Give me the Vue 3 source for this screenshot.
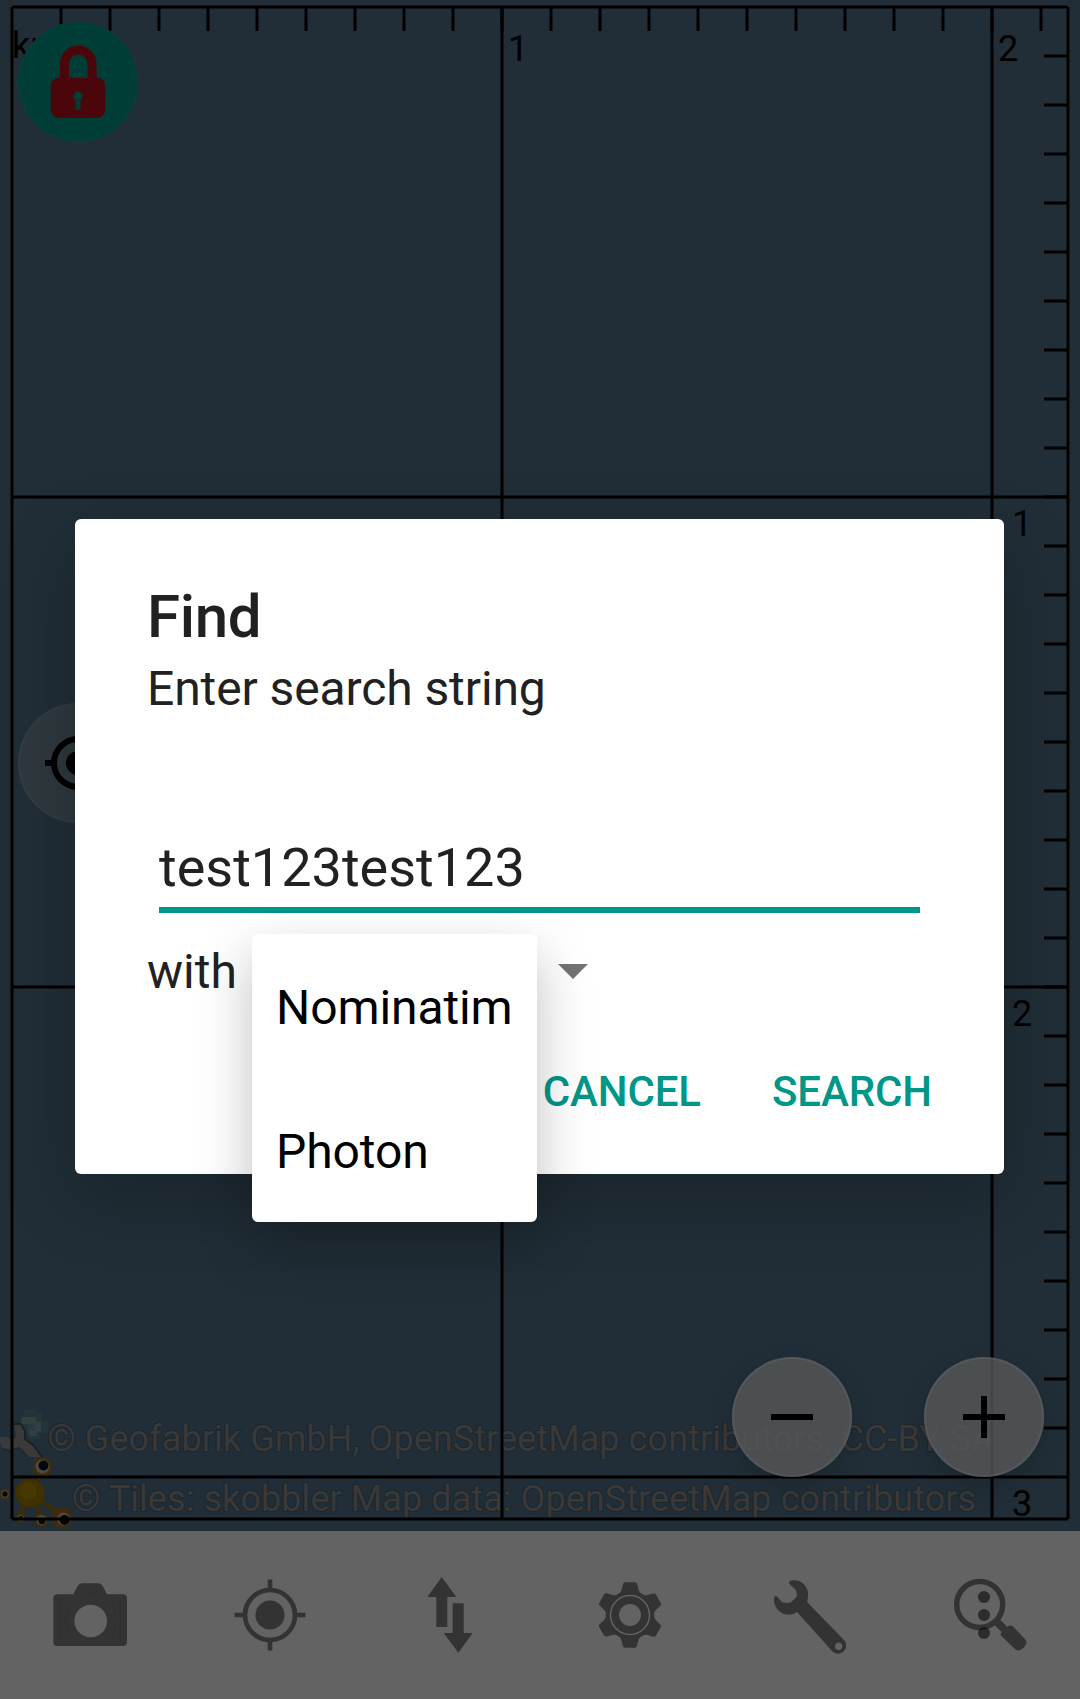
<script setup>
const range = (n) => Array.from({ length: n }, (_, i) => i)
const topTicks = range(21).map((i) => 61 + i * 49).filter((x) => x < 1060)
const sideTicks = range(29).map((i) => 56 + i * 49)
const teeth = range(6).map((i) => i * 60)
const providers = ['Nominatim', 'Photon']
</script>

<template>
  <div class="screen">
    <main class="map">
      <svg class="canvas" width="1080" height="1531" viewBox="0 0 1080 1531">
        <g class="geofabrik">
          <path d="M24 1409h12v4h6v8h6v12h-8v6H29v-4h-9v-20h4z" fill="#22363a" />
          <path d="M23 1417h13v5h5v9h-4v5h-8v-12h-8z" fill="#343f42" />
          <path d="M28 1424h7v7h-7z" fill="#2a3a3e" />
          <path d="M14 1424h7l4 7v8l9 7 8 11H28l-9-9-9 2-7-1-3-6v-6h7l4 3 5-3z" fill="#3b3a3a" />
          <path d="M14 1424h7l4 7v8l9 7 8 11" fill="none" stroke="#1b2023" stroke-width="2" />
          <path d="M28 1457l-9-9-9 3-7-2" fill="none" stroke="#22272a" stroke-width="2" />
        </g>
        <g class="skobbler">
          <path d="M38 1480L42 1470M25 1503L20 1514M35 1502L40 1514M40 1500L58 1513" fill="none" stroke="#3b2d0b" stroke-width="4.500" />
          <circle cx="42.500" cy="1467" r="10" fill="#402c0a" />
          <circle cx="30" cy="1493" r="14.500" fill="#3f3100" />
          <circle cx="28" cy="1491" r="9" fill="#453800" />
          <circle cx="5" cy="1494" r="5.500" fill="#402c0a" />
          <circle cx="21" cy="1518" r="5" fill="#402c0a" />
          <circle cx="41" cy="1520" r="7" fill="#402c0a" />
          <circle cx="62" cy="1518" r="10.500" fill="#402c0a" />
          <g fill="#4b4a49">
            <circle cx="42.500" cy="1466.500" r="7" />
            <circle cx="5" cy="1494" r="3.700" />
            <circle cx="21" cy="1518" r="3" />
            <circle cx="41.500" cy="1520" r="5" />
            <circle cx="63.500" cy="1519" r="6.500" />
          </g>
          <g fill="#060708">
            <circle cx="43.500" cy="1465.500" r="5" />
            <circle cx="5" cy="1494" r="2.700" />
            <circle cx="21" cy="1518" r="2" />
            <circle cx="42" cy="1521" r="3.300" />
            <circle cx="64.500" cy="1520" r="4.900" />
          </g>
        </g>

        <g class="credits">
          <text x="47.500" y="1451">© Geofabrik GmbH, OpenStreetMap contributors, CC-BY-SA</text>
          <text x="72" y="1511">© Tiles: skobbler Map data: OpenStreetMap contributors</text>
        </g>

        <g class="grid">
          <path d="M12 7V1519M502 7V1519M992 7V1519M1068 7V1519" />
          <path d="M12 7H1068M12 497H1068M12 987H1068M12 1477H1068M12 1519H1068" />
          <path v-for="x in topTicks" :key="'t' + x" :d="`M${x} 7V31`" />
          <path v-for="y in sideTicks" :key="'s' + y" :d="`M1044 ${y}H1068`" />
        </g>
        <g class="labels">
          <text x="12" y="58">km</text>
          <text x="508" y="61">1</text>
          <text x="998" y="61">2</text>
          <text x="1012" y="536">1</text>
          <text x="1012" y="1026">2</text>
          <text x="1012" y="1516">3</text>
        </g>
      </svg>

      <button class="fab lock" aria-label="Lock">
        <svg width="120" height="120" viewBox="18 22 120 120">
          <path d="M64.500 80V64a13.800 14 0 0 1 27.600 0V80" fill="none" stroke="#4b060b" stroke-width="9" />
          <rect x="50.700" y="77.700" width="54.700" height="40.300" rx="8.500" fill="#4b060b" />
          <path d="M76 97h4v12q-2 1.500-4 0z" fill="#003d36" stroke="#003d36" />
          <circle cx="78" cy="96" r="4.600" fill="#003d36" />
        </svg>
      </button>
      <button class="fab follow" aria-label="Follow position">
        <svg width="120" height="120" viewBox="-60 -60 120 120">
          <circle r="24" fill="none" stroke="#000" stroke-width="6" />
          <circle r="12" />
          <path d="M-33 0h8M25 0h8M0-33v8M0 25v8" stroke="#000" stroke-width="6" />
        </svg>
      </button>
      <button class="fab zoom out" aria-label="Zoom out">
        <svg width="120" height="120" viewBox="-60 -60 120 120"><path d="M-21-3h42v6h-42z" /></svg>
      </button>
      <button class="fab zoom in" aria-label="Zoom in">
        <svg width="120" height="120" viewBox="-60 -60 120 120"><path d="M-21-3h18v-18h6v18h18v6H3v18h-6V3h-18z" /></svg>
      </button>
    </main>

    <nav class="toolbar">
      <svg viewBox="-45 -45 90 90">
        <path fill-rule="evenodd" d="M-32.700-20.700h16l4.500-8.500q1.500-2.500 4-2.500H8.500q2.500 0 4 2.500l4.500 8.500H33q4 0 4 4V27q0 4-4 4H-32.700q-4 0-4-4V-16.700q0-4 4-4zM.7-10.300a16.300 16.300 0 1 0 .01 0z" />
        <path class="crease" d="M-30-13v37M30-13v37M-18-13q-12 19 0 37M20-13q12 19 0 37M-7-22H9" />
      </svg>
      <svg viewBox="-45 -45 90 90">
        <circle r="25" fill="none" stroke="#333" stroke-width="4.700" />
        <circle r="14.500" />
        <path d="M-35.500 0h10M25.500 0h10M0-35.500v10M0 25.500v10" stroke="#333" stroke-width="4.700" />
      </svg>
      <svg viewBox="-45 -45 90 90">
        <path d="M-8.300-38L6.300-18h-9v30h-11v-30h-9zM8.300 37.700L-6.300 18h9v-29.700h11V18h9z" />
      </svg>
      <svg viewBox="-45 -45 90 90">
        <circle r="20.500" fill="none" stroke="#333" stroke-width="7" />
        <path v-for="a in teeth" :key="a" :transform="`rotate(${a})`" d="M-13-20.500Q-9.500-21.500-8.600-24.500L-6.900-31q.4-1.700 2-1.700H5.100q1.600 0 2 1.700L8.800-24.500Q9.600-21.500 13-20.500z" />
        <circle r="14.700" fill="none" stroke="#333" stroke-width="7.500" />
        <circle r="19.500" fill="none" stroke="#636363" stroke-width="1.500" />
      </svg>
      <svg viewBox="-45 -45 90 90">
        <path fill-rule="evenodd" d="M-21-32.300C-21-35-15-35-12-34.200C-5-32-1-25-2-19L-2.700-12.700L34.500 25.500A8.200 8.200 0 0 1 23 37L-13-3C-16-.5-20-.2-23-.4C-31-1.500-37-9-36-17Q-35-20-33-18.500L-28-12.800Q-23-11.300-19-12.700L-13.300-18.300Q-12.800-22-14-25L-20-30.500zM28.700 27.600a3.700 3.700 0 1 0 .01 0z" />
      </svg>
      <svg viewBox="-45 -45 90 90">
        <circle cx="-10.300" cy="-10.500" r="23" fill="none" stroke="#333" stroke-width="5.500" />
        <path d="M6 6l12 12" stroke="#333" stroke-width="7.500" />
        <path d="M11 18l7.500-7q2.500-1.300 4.500.5L35 24q3 3.500-1 8.500-5 4.500-8.500 2L11.500 21q-1.500-1.500-.5-3z" />
        <g fill="#000" fill-opacity=".55">
          <circle cx="-6" cy="-18" r="6" />
          <circle cx="-6" cy="0" r="6" />
          <circle cx="-6" cy="18" r="6" />
        </g>
      </svg>
    </nav>

    <section class="dialog">
      <h1>Find</h1>
      <p class="message">Enter search string</p>
      <div class="field">test123test123</div>
      <div class="spinner">
        <span class="with">with</span>
        <svg width="30" height="15" viewBox="0 0 30 15"><path d="M0 0h30L15 15z" fill="#737373" /></svg>
      </div>
      <div class="actions">
        <button>CANCEL</button>
        <button>SEARCH</button>
      </div>
    </section>

    <ul class="menu">
      <li v-for="p in providers" :key="p">{{ p }}</li>
    </ul>
  </div>
</template>

<style>
body {
  margin: 0;
}
</style>

<style scoped>
.screen {
  position: relative;
  width: 1080px;
  height: 1699px;
  overflow: hidden;
  display: flex;
  flex-direction: column;
  font-family: Roboto, "Liberation Sans", sans-serif;
}
button {
  border: 0;
  padding: 0;
  background: none;
  font: inherit;
}
.map {
  position: relative;
  height: 1531px;
  background: #212e37;
}
.canvas {
  display: block;
}
.grid path {
  stroke: #000;
  stroke-width: 3;
}
.labels text {
  font-size: 36px;
  fill: #000;
}
.credits text {
  font-size: 36px;
  letter-spacing: 0.07px;
  fill: #3a3938;
  stroke: #1c262d;
  stroke-width: 2px;
  paint-order: stroke;
}
.fab {
  position: absolute;
  width: 120px;
  height: 120px;
  border-radius: 50%;
}
.fab svg {
  display: block;
}
.lock {
  left: 18px;
  top: 22px;
  background: #003d36;
  box-shadow: inset 0 0 0 1.5px #05403a;
}
.follow {
  left: 18px;
  top: 703px;
  background: #2e383e;
  box-shadow: inset 0 0 0 2px #333c41;
}
.zoom {
  top: 1357px;
  background: rgba(87, 88, 88, 0.8);
  box-shadow: inset 0 0 0 2px rgba(100, 100, 100, 0.4), 0 8px 24px rgba(0, 0, 0, 0.15);
}
.out {
  left: 732px;
}
.in {
  left: 924px;
}
.toolbar {
  height: 168px;
  background: #636363;
  display: flex;
  align-items: center;
  justify-content: space-around;
}
.toolbar svg {
  width: 90px;
  height: 90px;
  fill: #333;
}
.crease {
  fill: none;
  stroke: #303030;
  stroke-width: 1;
}
.dialog {
  position: absolute;
  left: 75px;
  top: 519px;
  width: 929px;
  height: 655px;
  box-sizing: border-box;
  padding: 63px 72px 0;
  border-radius: 6px;
  background: #fff;
  color: #212121;
  box-shadow: 0 24px 72px rgba(0, 0, 0, 0.24);
}
h1 {
  margin: 0;
  font-size: 60px;
  line-height: 70px;
  font-weight: 500;
  letter-spacing: -0.3px;
}
.message {
  margin: 9px 0 0;
  font-size: 48px;
  line-height: 56px;
  letter-spacing: -0.1px;
}
.field {
  margin: 119px 12px 0;
  padding-bottom: 7px;
  width: 761px;
  border-bottom: 6px solid #009688;
  font-size: 54px;
  line-height: 64px;
}
.spinner {
  margin-top: 31px;
  height: 56px;
  display: flex;
  align-items: center;
}
.spinner svg {
  margin-bottom: 2px;
}
.with {
  width: 411px;
  font-size: 48px;
  line-height: 56px;
}
.actions {
  margin-top: 67px;
  display: flex;
  justify-content: flex-end;
  gap: 71px;
}
.actions button {
  font-size: 42px;
  line-height: 50px;
  font-weight: 500;
  letter-spacing: -0.1px;
  color: #009688;
}
.menu {
  position: absolute;
  left: 252px;
  top: 934px;
  width: 285px;
  height: 288px;
  box-sizing: border-box;
  margin: 0;
  padding: 2px 0 0;
  list-style: none;
  border-radius: 6px;
  background: #fff;
  box-shadow: 0 22px 54px rgba(0, 0, 0, 0.25);
}
.menu li {
  height: 144px;
  padding-left: 24px;
  font-size: 48px;
  line-height: 144px;
  letter-spacing: -0.1px;
  color: #000;
}
</style>
